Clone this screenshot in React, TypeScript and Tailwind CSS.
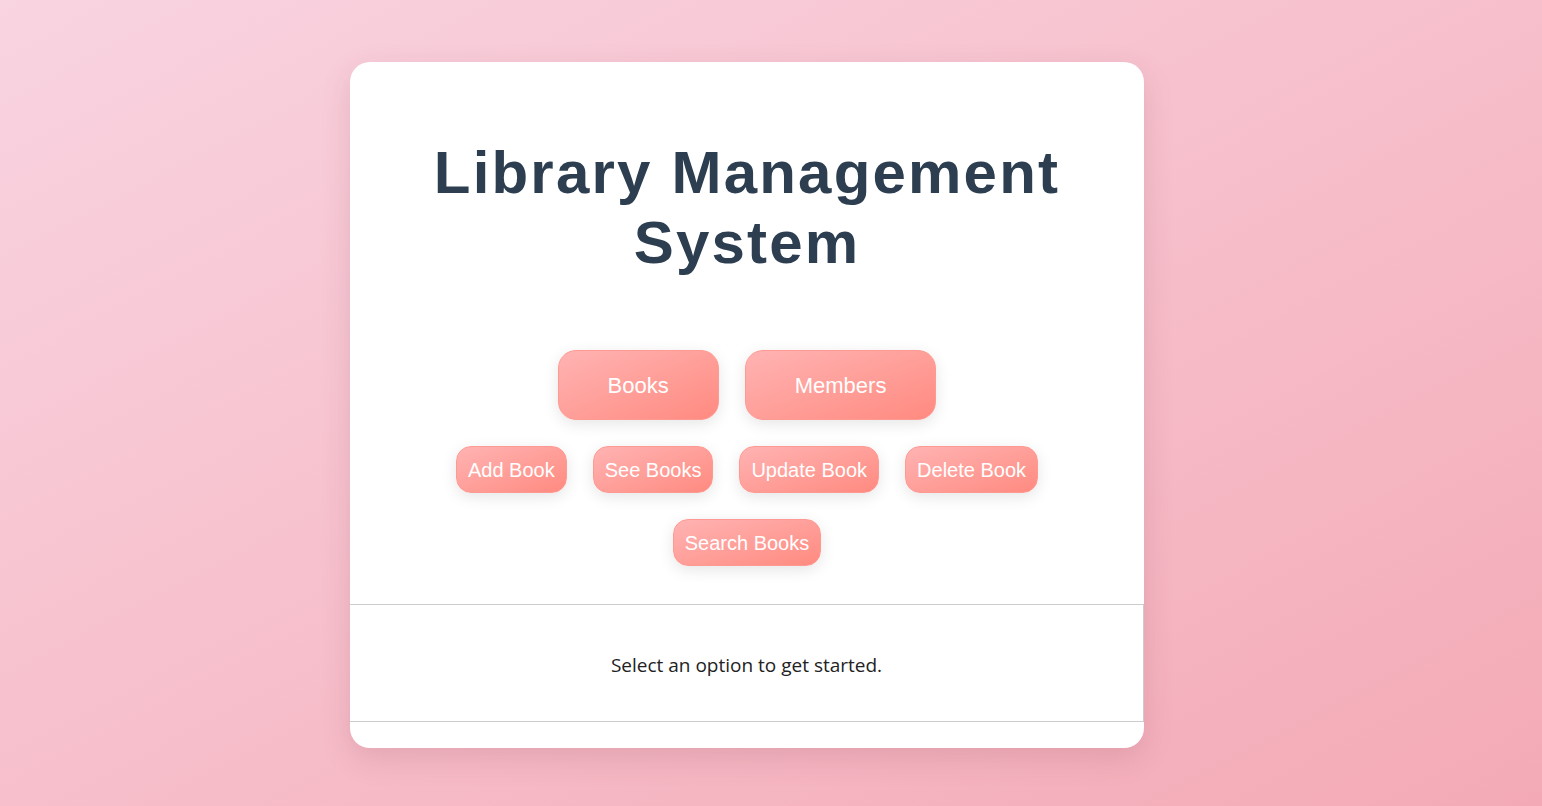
import React from "react";

const mainButtons = ["Books", "Members"];
const bookButtons = ["Add Book", "See Books", "Update Book", "Delete Book", "Search Books"];

const App = () => {
    return (
        <div className="min-h-screen w-full flex items-center justify-center pr-[48px] pt-[4px] bg-linear-to-br from-[#f9d4e1] to-[#f3aab6] font-['Liberation_Sans',Arial,sans-serif]">
            <div className="w-[794px] bg-white rounded-[20px] overflow-hidden shadow-[0_10px_30px_rgba(120,40,60,0.15)] pt-[76px] pb-[26px]">
                <h1 className="text-center text-[60px] leading-[70px] font-bold tracking-[2.2px] text-[#2c3e50] px-10">
                    Library Management System
                </h1>

                <div className="mt-[72px] flex justify-center gap-[26px]">
                    {mainButtons.map((label) => (
                        <button
                            key={label}
                            className="h-[70px] px-[49px] rounded-[18px] border border-[#ff9a92] bg-linear-to-br from-[#ffb3b3] to-[#ff8a80] text-white text-[22px] shadow-[0_4px_15px_rgba(0,0,0,0.1)]"
                        >
                            {label}
                        </button>
                    ))}
                </div>

                <div className="mt-[26px] mx-auto w-[640px] flex flex-wrap justify-center gap-[26px]">
                    {bookButtons.map((label) => (
                        <button
                            key={label}
                            className="h-[47px] px-[11px] rounded-[15px] border border-[#ff9a92] bg-linear-to-br from-[#ffb3b3] to-[#ff8a80] text-white text-[20px] shadow-[0_4px_15px_rgba(0,0,0,0.1)]"
                        >
                            {label}
                        </button>
                    ))}
                </div>

                <div className="mt-[38px] h-[118px] pt-[4px] border-y border-r border-[#cccccc] flex items-center justify-center">
                    <p className="text-[19px] text-[#222] font-['Open_Sans',sans-serif]">Select an option to get started.</p>
                </div>
            </div>
        </div>
    );
};

export default App;
